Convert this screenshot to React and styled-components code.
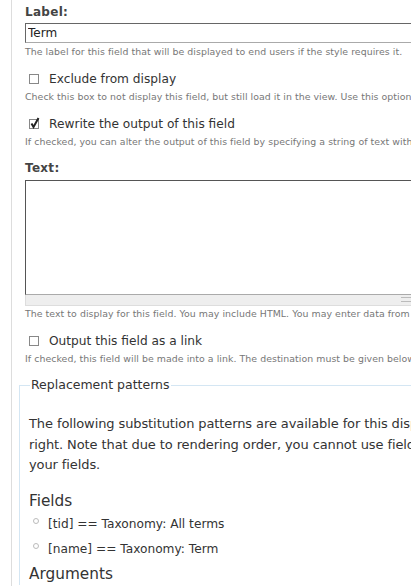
import styled, { createGlobalStyle } from "styled-components"

const GlobalStyle = createGlobalStyle`
  html, body {
    margin: 0;
    padding: 0;
    background: #fff;
    overflow: hidden;
  }
  body {
    font-family: "DejaVu Sans", Verdana, sans-serif;
    color: #333;
  }
`

const Page = styled.div`
  width: 411px;
  height: 586px;
  overflow: hidden;
  padding-left: 11px;
  box-sizing: border-box;
`

const Panel = styled.div`
  width: 640px;
  border-left: 1px solid #ddd;
  padding: 1px 0 0 13px;
  min-height: 586px;
`

const FormItem = styled.div`
  margin-bottom: ${(p) => p.gap ?? 12}px;
`

const Label = styled.label`
  display: block;
  font-weight: bold;
  font-size: 12px;
  letter-spacing: 0.3px;
  color: #444;
  line-height: 16px;
  padding-top: 3px;
`

const TextInput = styled.input`
  display: block;
  box-sizing: border-box;
  width: 600px;
  height: 20px;
  margin-top: 3px;
  padding: 0 2px;
  font-family: "DejaVu Sans", sans-serif;
  font-size: 12px;
  color: #222;
  border: 1px solid #aaa;
  border-top-color: #666;
  border-left-color: #666;
  outline: none;
`

const Description = styled.div`
  font-size: 9.4px;
  letter-spacing: 0.05px;
  color: #777;
  line-height: 13px;
  margin-top: ${(p) => p.top ?? 2}px;
  white-space: nowrap;
`

const CheckRow = styled.label`
  display: flex;
  align-items: center;
  gap: 10px;
  padding-left: 4px;
  font-size: 12.2px;
  color: #333;
  line-height: 18px;
`

const Box = styled.span`
  width: 8px;
  height: 8px;
  border: 1px solid #888;
  background: #fff;
  position: relative;
  flex: none;
`

const Tick = styled.svg`
  position: absolute;
  left: -1px;
  top: -3px;
`

const TextArea = styled.textarea`
  display: block;
  box-sizing: border-box;
  width: 600px;
  height: 115px;
  margin: 4px 0 0;
  resize: none;
  border: 1px solid #aaa;
  border-top-color: #555;
  border-left-color: #555;
  outline: none;
`

const Grip = styled.div`
  width: 600px;
  height: 11px;
  background: #eee;
  border: 1px solid #ddd;
  border-top: 0;
  box-sizing: border-box;
  position: relative;
`

const GripLines = styled.span`
  position: absolute;
  left: 375px;
  top: 2px;
  width: 10px;
  height: 3px;
  border-top: 1px solid #bbb;
  border-bottom: 1px solid #bbb;
`

const Fieldset = styled.fieldset`
  margin: 12px 0 0 -6px;
  padding: 21px 10px 0 9px;
  border: 1px solid #d4e6f3;
  border-bottom: 0;
  width: 620px;
`

const Legend = styled.legend`
  font-size: 12.5px;
  line-height: 16px;
  color: #333;
  padding: 0 1px;
  margin-left: 1px;
`

const Para = styled.p`
  margin: 0;
  font-size: 13px;
  letter-spacing: -0.1px;
  line-height: 20.5px;
  color: #333;
  white-space: nowrap;
`

const Heading = styled.h3`
  font-family: "DejaVu Sans", sans-serif;
  font-weight: normal;
  font-size: 15.3px;
  color: #333;
  margin: ${(p) => p.top ?? 0}px 0 0;
  line-height: 22px;
`

const List = styled.ul`
  list-style: none;
  margin: 0;
  padding: 0;
`

const Item = styled.li`
  display: flex;
  align-items: center;
  gap: 9px;
  font-size: 12.2px;
  line-height: 25px;
  color: #333;
  padding-left: 4px;

  &::before {
    content: "";
    width: 4px;
    height: 4px;
    border: 1px solid #bbb;
    border-radius: 50%;
    margin-top: -6px;
  }
`

const Check = ({ checked, children }) => (
  <CheckRow>
    <Box>
      {checked && (
        <Tick width="11" height="12" viewBox="0 0 11 12">
          <path d="M2.5 6.5 L4.5 10 L9.5 1" fill="none" stroke="#222" strokeWidth="2" />
        </Tick>
      )}
    </Box>
    {children}
  </CheckRow>
)

export default function App() {
  return (
    <Page>
      <GlobalStyle />
      <Panel>
        <FormItem>
          <Label>Label:</Label>
          <TextInput defaultValue="Term" />
          <Description>
            The label for this field that will be displayed to end users if the style requires it.
          </Description>
        </FormItem>

        <FormItem>
          <Check>Exclude from display</Check>
          <Description>
            Check this box to not display this field, but still load it in the view. Use this option to not show a grouping field in each record.
          </Description>
        </FormItem>

        <FormItem gap={9}>
          <Check checked>Rewrite the output of this field</Check>
          <Description>
            If checked, you can alter the output of this field by specifying a string of text with replacement tokens.
          </Description>
        </FormItem>

        <FormItem>
          <Label>Text:</Label>
          <TextArea />
          <Grip>
            <GripLines />
          </Grip>
          <Description top={1}>
            The text to display for this field. You may include HTML. You may enter data from this view as per the "Replacement patterns" below.
          </Description>
        </FormItem>

        <FormItem gap={0}>
          <Check>Output this field as a link</Check>
          <Description>
            If checked, this field will be made into a link. The destination must be given below.
          </Description>
        </FormItem>

        <Fieldset>
          <Legend>Replacement patterns</Legend>
          <Para>
            The following substitution patterns are available for this display. Use the pattern shown on the left to display the value indicated on the
            <br />
            right. Note that due to rendering order, you cannot use fields that come after this field; if you need a field not listed here, rearrange
            <br />
            your fields.
          </Para>
          <Heading top={14}>Fields</Heading>
          <List>
            <Item>[tid] == Taxonomy: All terms</Item>
            <Item>[name] == Taxonomy: Term</Item>
          </List>
          <Heading top={1}>Arguments</Heading>
        </Fieldset>
      </Panel>
    </Page>
  )
}
